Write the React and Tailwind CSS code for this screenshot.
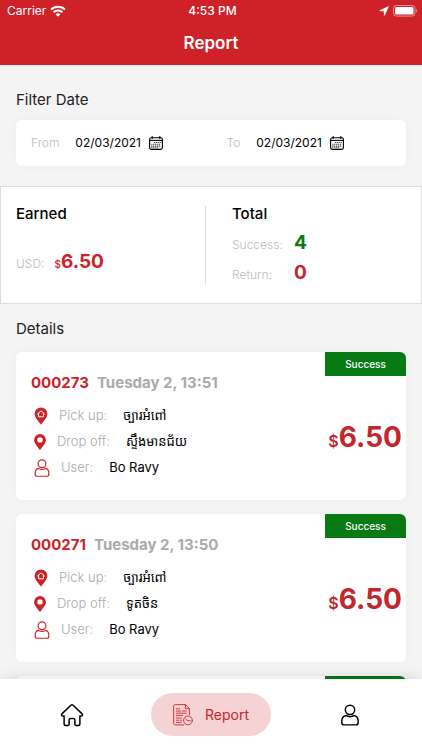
import React, { useState } from 'react';

const orders = [
  { id: '000273', date: 'Tuesday 2, 13:51', pickUp: 'ច្បារអំពៅ', dropOff: 'ស្ទឹងមានជ័យ', user: 'Bo Ravy', price: '6.50', status: 'Success' },
  { id: '000271', date: 'Tuesday 2, 13:50', pickUp: 'ច្បារអំពៅ', dropOff: 'ទូតចិន', user: 'Bo Ravy', price: '6.50', status: 'Success' },
  { id: '000270', date: 'Tuesday 2, 13:48', pickUp: 'ច្បារអំពៅ', dropOff: 'ទូតចិន', user: 'Bo Ravy', price: '6.50', status: 'Success' },
];

const WifiIcon = () => (
  <svg width="16" height="12" viewBox="0 0 16 12" fill="none" stroke="currentColor" strokeWidth="2">
    <path d="M1 4.6a10 10 0 0 1 14 0" />
    <path d="M3.6 7.3a6.3 6.3 0 0 1 8.8 0" />
    <path d="M8 11.8 5.6 9.3a3.5 3.5 0 0 1 4.8 0z" fill="currentColor" stroke="none" />
  </svg>
);

const LocationArrow = () => (
  <svg width="10" height="10" viewBox="0 0 10 10" fill="currentColor" stroke="currentColor" strokeWidth=".8" strokeLinejoin="round">
    <path d="M9.4.6.8 4.7l4.4.2.2 4.4z" />
  </svg>
);

const BatteryIcon = () => (
  <svg width="25" height="12" viewBox="0 0 25 12" fill="none">
    <rect x=".5" y=".5" width="21.5" height="10.6" rx="3" stroke="currentColor" strokeOpacity=".5" />
    <rect x="2" y="2" width="18.5" height="7.6" rx="1.5" fill="currentColor" />
    <path d="M23 4v3.6c1.2-.5 1.2-3.1 0-3.6z" fill="currentColor" fillOpacity=".5" />
  </svg>
);

const CalendarIcon = () => (
  <svg width="14" height="14" viewBox="0 0 14 14" fill="none" stroke="currentColor">
    <rect x=".6" y="1.8" width="12.8" height="11.6" rx="1.6" strokeWidth="1.1" />
    <path d="M.6 4.4h12.8" strokeWidth="1.1" />
    <path d="M3.2.2v2.6M10.8.2v2.6" strokeWidth="1.3" />
    <path d="M4.8 6.5h7M2.2 8.3h9.6M2.2 10.1h9.6M2.2 11.8h7" strokeWidth="1.1" strokeDasharray="1.3 .6" strokeOpacity=".75" />
  </svg>
);

const PickUpIcon = () => (
  <svg width="14" height="18" viewBox="0 0 14 18">
    <path d="M7 .4A6.4 6.4 0 0 0 .6 6.8c0 3.6 3.3 6.6 6.4 10.9 3.1-4.3 6.4-7.3 6.4-10.9A6.4 6.4 0 0 0 7 .4z" fill="currentColor" />
    <path d="M3.5 7 7 3.9 10.5 7M4.6 6.3v3.5h4.8V6.3" fill="none" stroke="#fff" strokeWidth="1" strokeLinejoin="round" strokeLinecap="round" />
  </svg>
);

const DropOffIcon = () => (
  <svg width="12" height="16" viewBox="0 0 12 16">
    <path fillRule="evenodd" d="M6 0a5.9 5.9 0 0 0-5.9 5.9C.1 9.2 3.2 12 6 16c2.8-4 5.9-6.8 5.9-10.1A5.9 5.9 0 0 0 6 0zm0 3.2a2.7 2.7 0 1 1 0 5.4 2.7 2.7 0 0 1 0-5.4z" fill="currentColor" />
  </svg>
);

const UserIcon = ({ className }) => (
  <svg className={className} viewBox="0 0 20 24" fill="none" stroke="currentColor" strokeWidth="1.6" strokeLinejoin="round">
    <circle cx="10" cy="6.3" r="5.2" />
    <path d="M5.6 12.5c-2.8.5-4.7 3.2-4.7 6.5v1.2c0 1.7 1 2.8 2.8 2.8h12.6c1.8 0 2.8-1.1 2.8-2.8V19c0-3.3-1.9-6-4.7-6.5-1.2.9-2.8 1.4-4.4 1.4s-3.2-.5-4.4-1.4z" />
  </svg>
);

const HomeIcon = () => (
  <svg width="24" height="24" viewBox="0 0 24 24" fill="none" stroke="currentColor" strokeWidth="1.5" strokeLinejoin="round" strokeLinecap="round">
    <path d="M10.9 2.3 1.9 10.9c-.8.8-.4 2 .8 2h1.4v8.2c0 .9.6 1.5 1.5 1.5h2.2c.8 0 1.3-.5 1.3-1.3v-4.1c0-1.1.7-1.7 1.7-1.7h2.4c1 0 1.7.6 1.7 1.7v4.1c0 .8.5 1.3 1.3 1.3h2.2c.9 0 1.5-.6 1.5-1.5v-8.2h1.4c1.2 0 1.6-1.2.8-2l-9-8.6c-.7-.7-1.5-.7-2.2 0z" />
  </svg>
);

const ReportIcon = () => (
  <svg width="20" height="22" viewBox="0 0 20 22" fill="none" stroke="currentColor" strokeWidth=".9" strokeLinecap="round" strokeLinejoin="round">
    <path d="M10.8 20.9H2.2C1.3 20.9.6 20.3.6 19.4V2.1C.6 1.2 1.3.6 2.2.6h10.2L16.4 4.6v6" />
    <path d="M12.4.6v4h4" />
    <path d="M3.4 4.8h3.2M3.4 7h4.2M9.2 7h4.2M3.4 9.2h10M3.4 11.4h6.2M3.4 14h5M3.4 16.2h2.4M7.4 16.2h1.6M3.4 18.4h4.8" />
    <circle cx="15" cy="16.4" r="4.4" />
    <path d="M12.8 15.2l2.3 1.7 2.3-.2" />
  </svg>
);

const DateField = ({ label, value, className }) => (
  <div className={`flex items-center ${className}`}>
    <span id={`label-${label}`} className="font-light text-[#bbb]">{label}</span>
    <button aria-labelledby={`label-${label}`} className="ml-4 flex items-center gap-2 text-black">
      {value}
      <CalendarIcon />
    </button>
  </div>
);

const OrderRow = ({ icon, label, value }) => (
  <div className="flex h-[26px] items-center pl-[3px]">
    {icon}
    <span className="ml-[11px] font-light text-[#aaa]">{label}:</span>
    <span className="ml-4 whitespace-nowrap text-black">{value}</span>
  </div>
);

const OrderCard = ({ order }) => (
  <article className="relative flex h-[148px] shrink-0 items-center justify-between overflow-hidden rounded-md bg-white pr-1 pl-[15px] shadow-[0_0_12px_rgba(0,0,0,0.03)]">
    <div className="text-[13px]">
      <h3 className="mb-2 flex h-6 items-center gap-2 text-[15px] font-bold whitespace-nowrap">
        <span className="text-[#cf2228]">{order.id}</span>
        <span className="text-[#aaa]">{order.date}</span>
      </h3>
      <div className="text-[#cf2228]">
        <OrderRow icon={<PickUpIcon />} label="Pick up" value={order.pickUp} />
        <OrderRow icon={<DropOffIcon />} label="Drop off" value={order.dropOff} />
        <OrderRow icon={<UserIcon className="h-[18px] w-4" />} label="User" value={order.user} />
      </div>
    </div>
    <p className="mt-[22px] flex items-baseline text-[#c1272d]">
      <span className="text-base font-semibold">$</span>
      <span className="text-[28px] font-bold">{order.price}</span>
    </p>
    <span className="absolute top-0 right-0 flex h-6 w-[81px] items-center justify-center bg-[#087a14] text-[10px] font-medium text-white">
      {order.status}
    </span>
  </article>
);

const TotalRow = ({ label, value, className }) => (
  <div className="flex h-[30px] items-baseline">
    <span className="w-[62px] text-xs font-light text-[#bbb]">{label}:</span>
    <span className={`text-[19px] font-bold ${className}`}>{value}</span>
  </div>
);

const App = () => {
  const [tab, setTab] = useState('Report');

  return (
    <div className="flex h-screen flex-col bg-[#f4f4f4] font-['Inter','Noto_Sans_Khmer',sans-serif] text-black">
      <header className="shrink-0 bg-[#cf2228] text-white">
        <div className="grid h-[22px] grid-cols-3 items-center pr-1 pl-[7px] text-xs">
          <div className="flex items-center gap-1">
            Carrier
            <WifiIcon />
          </div>
          <span className="text-center font-medium">4:53 PM</span>
          <div className="flex items-center justify-end gap-1">
            <LocationArrow />
            <BatteryIcon />
          </div>
        </div>
        <h1 className="flex h-[43px] items-center justify-center text-[17px] font-semibold">Report</h1>
      </header>

      <main className="min-h-0 flex-1 overflow-y-auto pt-6 [scrollbar-width:none]">
        <section className="px-4">
          <h2 className="text-[15px] leading-[22px] text-[#222]">Filter Date</h2>
          <div className="mt-[9px] flex h-[46px] items-center rounded-md bg-white px-[15px] text-xs shadow-[0_0_12px_rgba(0,0,0,0.03)]">
            <DateField label="From" value="02/03/2021" className="flex-[196]" />
            <DateField label="To" value="02/03/2021" className="flex-[165]" />
          </div>
        </section>

        <section className="mt-5 flex h-[118px] items-center border border-[#ddd] bg-white">
          <div className="h-[78px] flex-1 border-r border-[#ddd] pl-[15px]">
            <h2 className="text-[15px] leading-4 font-medium">Earned</h2>
            <p className="mt-[26px] flex items-baseline text-[#cf2228]">
              <span className="text-xs font-light text-[#bbb]">USD:</span>
              <span className="ml-[10px] text-[10px] font-medium">$</span>
              <span className="text-[19px] font-bold">6.50</span>
            </p>
          </div>
          <div className="h-[78px] flex-1 pl-[26px]">
            <h2 className="mb-[7px] text-[15px] leading-4 font-medium">Total</h2>
            <TotalRow label="Success" value={4} className="text-[#087a14]" />
            <TotalRow label="Return" value={0} className="text-[#c1272d]" />
          </div>
        </section>

        <section className="px-4 pt-[14px]">
          <h2 className="text-[15px] leading-[22px] text-[#222]">Details</h2>
          <div className="mt-3 flex flex-col gap-[14px]">
            {orders.map((order) => (
              <OrderCard key={order.id} order={order} />
            ))}
          </div>
        </section>
      </main>

      <nav className="z-10 flex h-[71px] shrink-0 items-center justify-between bg-white px-3 shadow-[0_0_14px_rgba(0,0,0,0.12)]">
        <button aria-label="Home" onClick={() => setTab('Home')} className="flex h-[43px] w-[120px] items-center justify-center">
          <HomeIcon />
        </button>
        <button
          aria-current={tab === 'Report'}
          onClick={() => setTab('Report')}
          className="flex h-[43px] w-[120px] items-center justify-center gap-3 rounded-full bg-[#f5d3d5] text-sm text-[#cf2228]"
        >
          <ReportIcon />
          Report
        </button>
        <button aria-label="Profile" onClick={() => setTab('Profile')} className="flex h-[43px] w-[120px] items-center justify-center">
          <UserIcon className="h-[22px] w-[18px]" />
        </button>
      </nav>
    </div>
  );
};

export default App;
